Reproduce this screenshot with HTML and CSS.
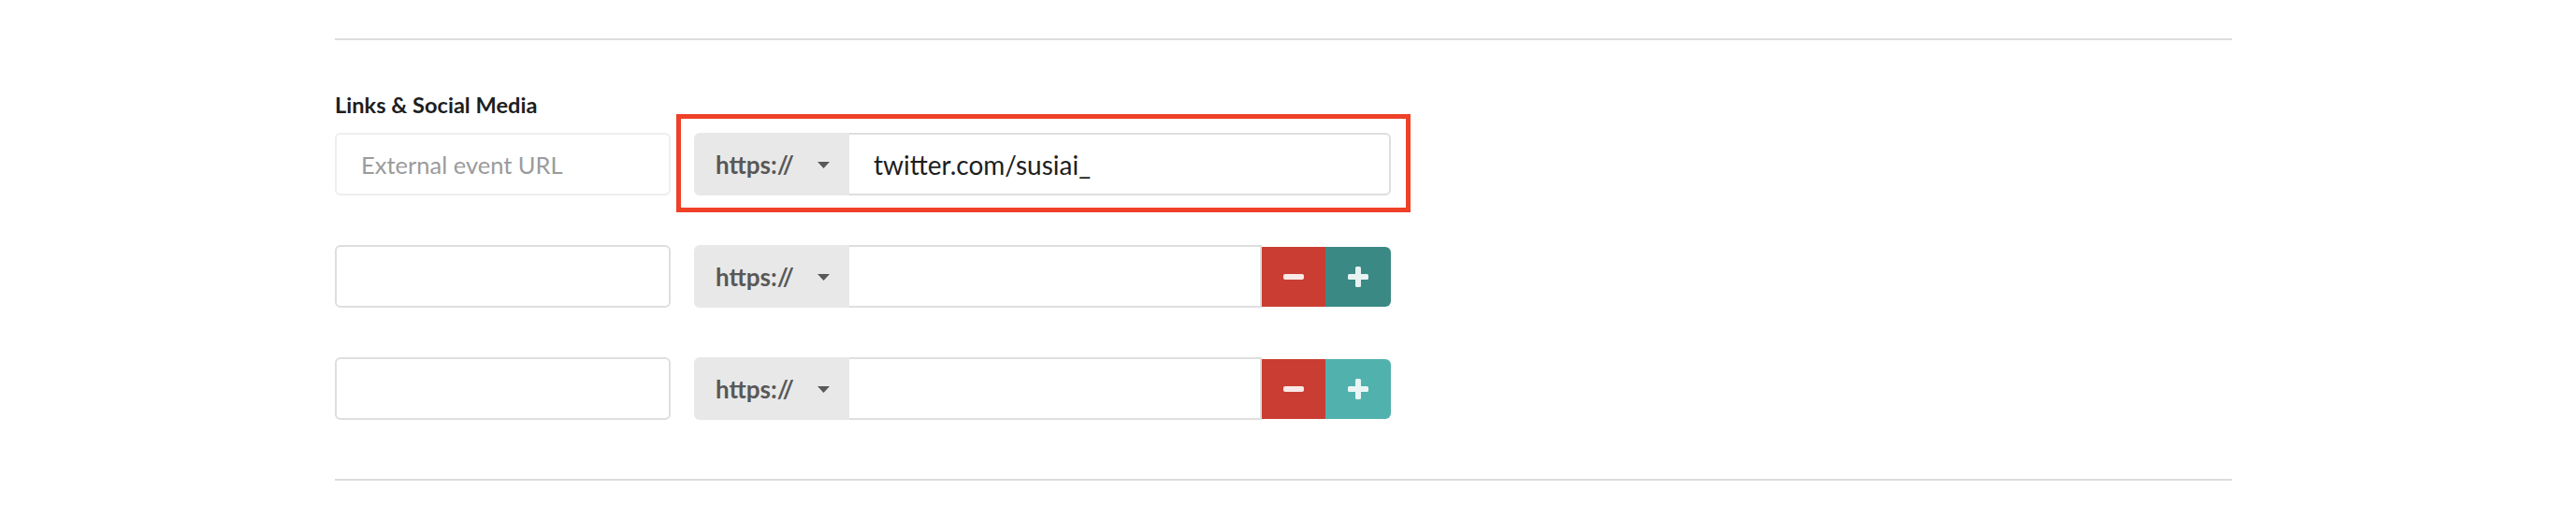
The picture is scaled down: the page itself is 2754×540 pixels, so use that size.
FILE: index.html
```html
<!DOCTYPE html>
<html lang="en">
<head>
<meta charset="utf-8">
<title>Links &amp; Social Media</title>
<link rel="stylesheet" href="styles.css">
</head>
<body>
<div class="page">
  <hr class="rule">
  <h3 class="heading">Links &amp; Social Media</h3>
  <div class="rows">
    <div class="row">
      <input class="field field-soft" type="text" placeholder="External event URL">
      <div class="group group-highlight">
        <div class="addon"><span>https://</span><svg class="caret" width="13" height="7" viewBox="0 0 13 7"><path d="M0 0h13L6.5 7z" fill="#585858"/></svg></div>
        <input class="group-input group-input-end" type="text" value="twitter.com/susiai_">
      </div>
    </div>
    <div class="row">
      <input class="field" type="text">
      <div class="group">
        <div class="addon"><span>https://</span><svg class="caret" width="13" height="7" viewBox="0 0 13 7"><path d="M0 0h13L6.5 7z" fill="#585858"/></svg></div>
        <input class="group-input" type="text">
        <button class="btn btn-remove" type="button"><svg width="22" height="6" viewBox="0 0 22 6"><rect width="22" height="6" rx="2" fill="#f9e9e7"/></svg></button>
        <button class="btn btn-add btn-add-dark" type="button"><svg width="22" height="22" viewBox="0 0 22 22"><rect y="8" width="22" height="6" rx="1.5" fill="#e8f2f1"/><rect x="8" width="6" height="22" rx="1.5" fill="#e8f2f1"/></svg></button>
      </div>
    </div>
    <div class="row">
      <input class="field" type="text">
      <div class="group">
        <div class="addon"><span>https://</span><svg class="caret" width="13" height="7" viewBox="0 0 13 7"><path d="M0 0h13L6.5 7z" fill="#585858"/></svg></div>
        <input class="group-input" type="text">
        <button class="btn btn-remove" type="button"><svg width="22" height="6" viewBox="0 0 22 6"><rect width="22" height="6" rx="2" fill="#f9e9e7"/></svg></button>
        <button class="btn btn-add" type="button"><svg width="22" height="22" viewBox="0 0 22 22"><rect y="8" width="22" height="6" rx="1.5" fill="#eaf6f5"/><rect x="8" width="6" height="22" rx="1.5" fill="#eaf6f5"/></svg></button>
      </div>
    </div>
  </div>
  <hr class="rule rule-bottom">
</div>
</body>
</html>
```
FILE: styles.css
```css
* { box-sizing: border-box; }

html, body {
  margin: 0;
  background: #ffffff;
  font-family: "Lato", "Noto Sans", sans-serif;
  color: #222;
}

.page {
  padding: 41px 0 0 358px;
  width: 2386px;
}

.rule {
  display: block;
  height: 2px;
  margin: 0;
  border: 0;
  background: #dcdcdc;
}

.rule-bottom {
  margin-top: 63px;
}

.heading {
  margin: 55px 0 0;
  font-size: 23.6px;
  line-height: 29px;
  font-weight: 700;
  color: #1e1e1e;
}

.rows {
  margin-top: 15px;
  display: flex;
  flex-direction: column;
  gap: 53px;
}

.row {
  display: flex;
  align-items: center;
  gap: 25px;
  height: 67px;
}

.field {
  width: 359px;
  height: 67px;
  padding: 0 26px;
  border: 2px solid #dedede;
  border-radius: 6px;
  background: #fff;
  font-family: "Lato", sans-serif;
  font-size: 25.5px;
  color: #222;
  outline: none;
}

.field-soft {
  border-color: #eeeeee;
}

.field::placeholder {
  color: #9b9b9b;
}

.group {
  position: relative;
  display: flex;
  align-items: center;
  width: 745px;
  height: 67px;
}

.group-highlight::after {
  content: "";
  position: absolute;
  top: -20px;
  right: -21px;
  bottom: -18px;
  left: -19px;
  border: 5px solid #ee4128;
  pointer-events: none;
}

.addon {
  flex: 0 0 166px;
  height: 67px;
  display: flex;
  align-items: center;
  justify-content: space-between;
  padding: 0 21px 0 23px;
  background: #e8e8e8;
  border-radius: 6px 0 0 6px;
  font-size: 26px;
  font-weight: 700;
  color: #585858;
}

.caret {
  display: block;
  margin-top: 2px;
}

.group-input {
  flex: 1 1 auto;
  min-width: 0;
  height: 67px;
  padding: 0 26px;
  border: 2px solid #dedede;
  border-left: 0;
  background: #fff;
  font-family: "Lato", sans-serif;
  font-size: 28px;
  color: #1e1e1e;
  outline: none;
}

.group-input-end {
  border-radius: 0 6px 6px 0;
}

.btn {
  height: 64px;
  border: 0;
  padding: 0;
  margin: 0;
  display: flex;
  align-items: center;
  justify-content: center;
  cursor: pointer;
}

.btn-remove {
  flex: 0 0 68px;
  background: #c93d33;
}

.btn-add {
  flex: 0 0 70px;
  background: #51b2ad;
  border-radius: 0 6px 6px 0;
}

.btn-add-dark {
  background: #3b8984;
}
```
